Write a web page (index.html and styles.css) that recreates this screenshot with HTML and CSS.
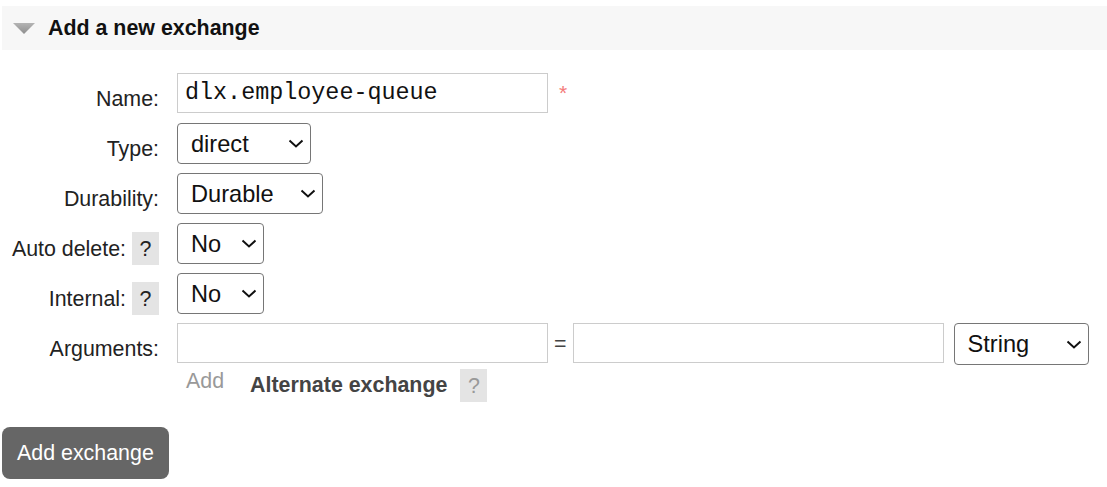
FILE: index.html
```html
<!DOCTYPE html>
<html lang="en">
<head>
<meta charset="utf-8">
<title>Add a new exchange</title>
<link rel="stylesheet" href="styles.css">
</head>
<body>
<div class="page">
  <div class="section">
    <h2 class="section-head">
      <svg class="toggle" width="22" height="11" viewBox="0 0 22 11" aria-hidden="true">
        <defs>
          <linearGradient id="tg" x1="0" y1="0" x2="0" y2="1">
            <stop offset="0" stop-color="#b4b4b4"/>
            <stop offset="1" stop-color="#8e8e8e"/>
          </linearGradient>
        </defs>
        <polygon points="0,0 22,0 11,11" fill="url(#tg)"/>
      </svg>
      <span>Add a new exchange</span>
    </h2>
    <form class="form">
      <label class="lbl">Name:</label>
      <div class="ctl">
        <input class="txt name" type="text" value="dlx.employee-queue">
        <span class="req">*</span>
      </div>

      <label class="lbl">Type:</label>
      <div class="ctl">
        <select class="sel w-type"><option>direct</option></select>
      </div>

      <label class="lbl">Durability:</label>
      <div class="ctl">
        <select class="sel w-dur"><option>Durable</option></select>
      </div>

      <label class="lbl">Auto delete: <span class="help">?</span></label>
      <div class="ctl">
        <select class="sel w-no"><option>No</option></select>
      </div>

      <label class="lbl">Internal: <span class="help">?</span></label>
      <div class="ctl">
        <select class="sel w-no"><option>No</option></select>
      </div>

      <label class="lbl">Arguments:</label>
      <div class="ctl args">
        <input class="txt arg" type="text">
        <span class="eq">=</span>
        <input class="txt arg" type="text">
        <select class="sel w-str"><option>String</option></select>
      </div>

      <div class="spacer"></div>
      <div class="ctl extra">
        <span class="add">Add</span>
        <span class="alt">Alternate exchange</span>
        <span class="help help-dim">?</span>
      </div>
    </form>
    <button class="btn" type="button">Add exchange</button>
  </div>
</div>
</body>
</html>
```

FILE: styles.css
```css
* { box-sizing: border-box; }

html, body {
  margin: 0;
  padding: 0;
  background: #fff;
}

body {
  font-family: "Liberation Sans", Arial, sans-serif;
  font-size: 21.4px;
  line-height: 24px;
  color: #222;
}

.page {
  padding: 6px 0 0 2px;
}

.section-head {
  display: flex;
  align-items: center;
  height: 44px;
  margin: 0;
  background: #f7f7f7;
  font-size: 21.4px;
  font-weight: bold;
  color: #111;
}

.toggle {
  display: block;
  margin-left: 11px;
  margin-right: 13px;
}

.form {
  display: grid;
  grid-template-columns: 157px 1fr;
  grid-template-rows: repeat(5, 50px) 46px auto;
  column-gap: 18px;
  margin-top: 23px;
}

.lbl {
  display: block;
  text-align: right;
  padding-top: 14px;
  white-space: nowrap;
}

.lbl .help {
  margin-left: 0;
}

.help {
  display: inline-block;
  width: 27px;
  height: 33px;
  padding-top: 5px;
  margin-top: -5px;
  text-align: center;
  background: #e4e4e4;
  color: #222;
  vertical-align: top;
}

.ctl {
  display: flex;
  align-items: flex-start;
}

.txt {
  height: 40px;
  border: 1px solid #ccc;
  border-radius: 0;
  padding: 0 7px;
  background: #fff;
  outline: none;
}

.name {
  width: 371px;
  font-family: "Liberation Mono", "Courier New", monospace;
  font-size: 23.4px;
  color: #111;
}

.req {
  margin-left: 11px;
  margin-top: 8px;
  color: #f47a7a;
  font-size: 21px;
}

.sel {
  -webkit-appearance: none;
  appearance: none;
  height: 41px;
  border: 1px solid #767676;
  border-radius: 4px;
  padding: 0 0 0 13px;
  font-family: "Liberation Sans", Arial, sans-serif;
  font-size: 23.6px;
  color: #111;
  background-color: #fff;
  background-image: url("data:image/svg+xml,%3Csvg xmlns='http://www.w3.org/2000/svg' width='16' height='9' viewBox='0 0 16 9'%3E%3Cpath d='M1.5 1.5l6.5 6 6.5-6' fill='none' stroke='%23111' stroke-width='2'/%3E%3C/svg%3E");
  background-repeat: no-repeat;
  background-position: right 6px center;
}

.w-type { width: 134px; }
.w-dur { width: 146px; }
.w-no { width: 87px; }
.w-str { width: 135px; height: 42px; margin-left: 10px; }

.arg {
  width: 371px;
}

.eq {
  margin: 9px 6px 0 6px;
  color: #444;
}

.extra {
  align-items: flex-start;
}

.add {
  margin-left: 9px;
  color: #999;
}

.alt {
  margin-left: 26px;
  margin-top: 4px;
  font-weight: bold;
  color: #444;
}

.extra .help {
  margin-top: 0;
  margin-left: 13px;
}

.help-dim {
  color: #999;
}

.btn {
  display: block;
  margin-top: 25px;
  padding: 14px 15px;
  border: 0;
  border-radius: 8px;
  background: #666;
  color: #fff;
  font-family: "Liberation Sans", Arial, sans-serif;
  font-size: 21.4px;
  line-height: 24px;
  cursor: pointer;
}
```
